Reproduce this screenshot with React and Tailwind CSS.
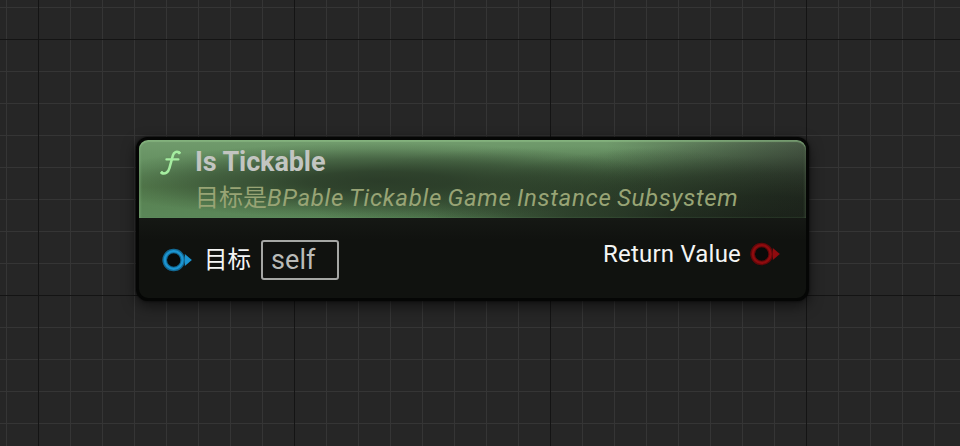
const uiFont = "font-['Roboto','Noto_Sans_CJK_SC',sans-serif]";

function Pin({ className }) {
  return (
    <svg viewBox="0 0 30 24" className={`h-6 w-[30px] shrink-0 ${className}`} aria-hidden="true">
      <circle cx="11.7" cy="12" r="9" fill="#080a09" stroke="currentColor" strokeWidth="4.6" />
      <circle cx="11.7" cy="12" r="10.7" fill="none" stroke="#000" strokeOpacity=".3" strokeWidth="1.4" />
      <circle cx="11.7" cy="12" r="7.2" fill="none" stroke="#000" strokeOpacity=".3" strokeWidth="1.2" />
      <path d="M22.8 6 29.9 12 22.8 18Z" fill="currentColor" />
    </svg>
  );
}

function FunctionIcon() {
  return (
    <svg viewBox="0 0 22 26" className="h-[26px] w-[22px] shrink-0" fill="none" stroke="#a5eda0" strokeLinecap="round" aria-hidden="true">
      <path d="M19.3 2.6C16.6.8 13.8 2 12.9 5.4L9.5 17.8C8.3 22.3 5.4 24.4 1.6 23" strokeWidth="2.5" />
      <path d="M6.4 9.4h12" strokeWidth="2.2" />
      <circle cx="19.1" cy="2.8" r="1.1" fill="#a5eda0" />
      <circle cx="2" cy="22.6" r="1.1" fill="#a5eda0" />
    </svg>
  );
}

function Header() {
  return (
    <header className="flex h-[78px] gap-[13px] rounded-t-[9px] bg-[radial-gradient(ellipse_290px_38px_at_240px_41px,rgba(40,56,38,0.92)_0%,rgba(40,56,38,0.84)_25%,rgba(40,56,38,0.5)_58%,rgba(40,56,38,0.14)_85%,transparent_100%),radial-gradient(ellipse_270px_50px_at_430px_56px,rgba(40,58,38,0.7)_0%,rgba(40,58,38,0.5)_40%,rgba(40,58,38,0.18)_75%,transparent_100%),radial-gradient(ellipse_340px_76px_at_94%_100%,#1a2019_0%,rgba(26,32,25,0.92)_28%,rgba(26,32,25,0.6)_58%,rgba(26,32,25,0.2)_82%,transparent_100%),linear-gradient(90deg,transparent_70%,rgba(58,66,56,0.75)_100%),linear-gradient(180deg,#719b6d_0%,#638f5f_35%,#57804f_60%,#5b8759_100%)] pl-[21px] shadow-[inset_0_2px_1px_rgba(146,194,139,0.55),inset_2px_0_2px_rgba(130,175,125,0.35),inset_-2px_0_2px_rgba(90,115,85,0.2)]">
      <div className="pt-[10px]"><FunctionIcon /></div>
      <div className="whitespace-nowrap">
        <h1 className="mt-[6px] text-[27px] leading-8 font-bold tracking-[-0.1px] text-[#c2c5c1]">Is Tickable</h1>
        <p className="mt-[4px] text-[24px] leading-8 tracking-[0.7px] text-[#98a475]">
          <span className="tracking-normal">目标是</span><span className="italic [word-spacing:-1.1px]">BPable Tickable Game Instance Subsystem</span>
        </p>
      </div>
    </header>
  );
}

export default function App() {
  return (
    <main className={`h-[446px] w-[960px] overflow-hidden bg-[#262626] bg-[linear-gradient(90deg,#141414_1px,transparent_1px),linear-gradient(180deg,#141414_1px,transparent_1px),linear-gradient(90deg,#353535_1px,transparent_1px),linear-gradient(180deg,#353535_1px,transparent_1px)] bg-[size:256px_256px,256px_256px,32px_32px,32px_32px] bg-[position:38px_39px,38px_39px,6px_7px,6px_7px] pt-[137px] pl-[136px] ${uiFont}`}>
      <section className="h-[164px] w-[673px] rounded-[12px] border-[3px] border-[#050605] bg-[#10120f] shadow-[0_5px_14px_rgba(0,0,0,0.55),0_0_3px_rgba(0,0,0,0.7)]">
        <Header />
        <div className="flex items-start justify-between bg-[linear-gradient(180deg,#151814_0%,#10120f_35%)] pr-[26px] pl-[23px]">
          <div className="flex items-center pt-[22px]">
            <Pin className="text-[#1b95d2]" />
            <span className="ml-[12px] text-[23.5px] leading-8 text-[#f4f5f4]">目标</span>
            <span className="ml-[10px] flex h-10 w-[78px] items-center rounded-[3px] border-2 border-[#a5a7a4] pl-[8px] text-[27px] tracking-[0.1px] text-[#b9bbb8]">self</span>
          </div>
          <div className="flex items-center pt-[20px]">
            <span className="text-[24px] leading-8 tracking-[0.2px] text-[#f4f5f4]">Return Value</span>
            <Pin className="ml-[9px] text-[#8f0b0e]" />
          </div>
        </div>
      </section>
    </main>
  );
}
